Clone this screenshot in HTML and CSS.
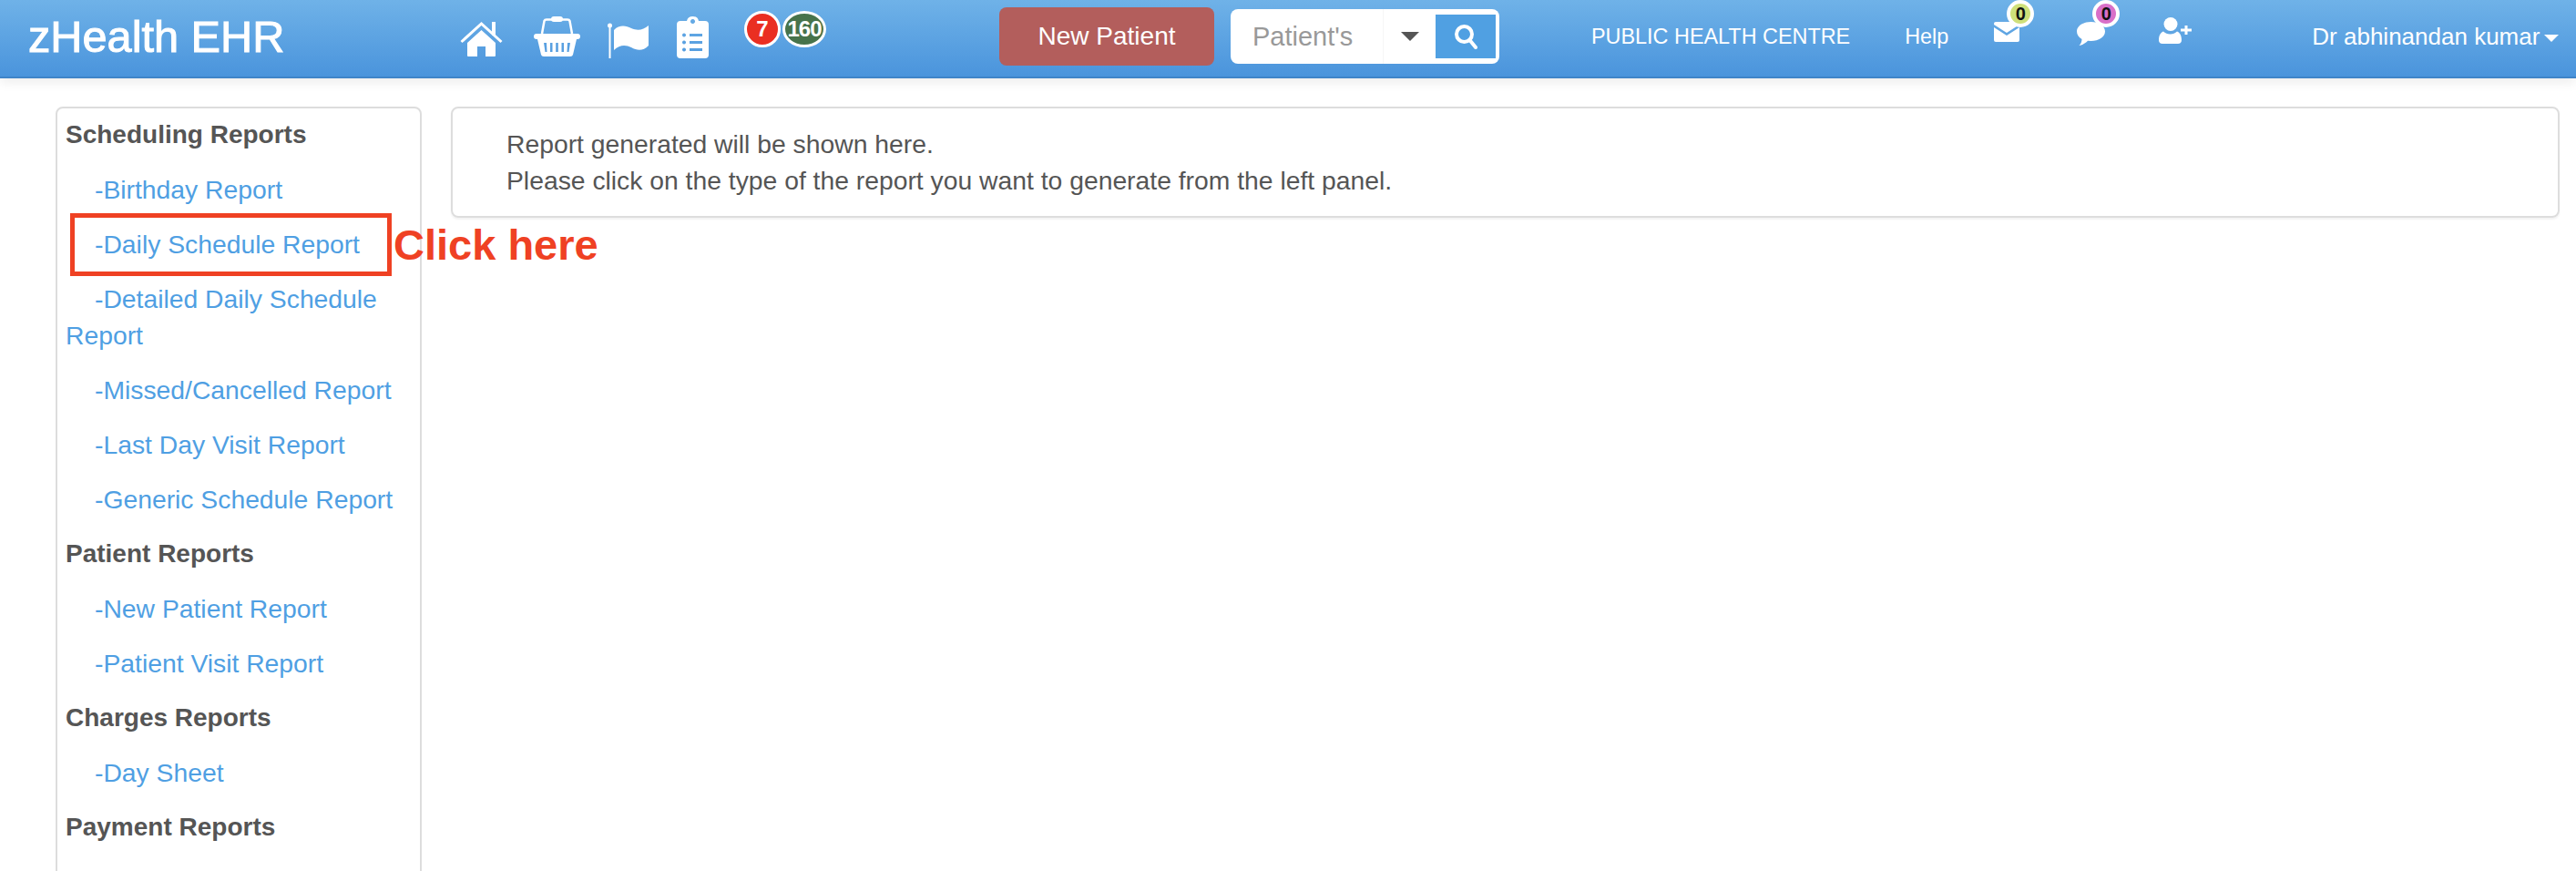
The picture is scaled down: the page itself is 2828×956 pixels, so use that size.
FILE: index.html
```html
<!DOCTYPE html>
<html lang="en">
  <head>
    <meta charset="utf-8" />
    <title>zHealth EHR</title>
    <link rel="stylesheet" href="styles.css">
  </head>
  <body>
    <header class="topbar">
      <a class="brand">zHealth EHR</a>

      <svg class="icon icon-home" viewBox="0 0 47 39">
        <path d="M1.500 23 23.500 3 45.500 23" fill="none" stroke="#fff" stroke-width="3" />
        <rect x="35" y="1" width="4" height="15" fill="#fff" />
        <path d="M8 24 23.500 10 39 24V38a1 1 0 0 1-1 1H28V28H19V39H9a1 1 0 0 1-1-1Z" fill="#fff" />
      </svg>
      <svg class="icon icon-basket" viewBox="0 0 51 44">
        <path d="M9 19 11.500 5Q12 3.500 14 3.500H37Q39 3.500 39.500 5L42 19" fill="none" stroke="#fff" stroke-width="2.500" />
        <rect x="19" y="0" width="13" height="6" rx="3" fill="#fff" />
        <rect x="0" y="19" width="51" height="6" rx="3" fill="#fff" />
        <path fill-rule="evenodd" d="M4 25H47L43 42Q42.500 44 40 44H11Q8.500 44 8 42ZM11 29 12.500 39H14.500L14 29ZM18 29V39H20.500V29ZM24.200 29V39H26.800V29ZM30.500 29V39H33V29ZM37 29 36.500 39H38.500L40 29Z" fill="#fff" />
      </svg>
      <svg class="icon icon-flag" viewBox="0 0 46 39">
        <rect x="1.500" y="3" width="2" height="36" fill="#fff" />
        <circle cx="2.500" cy="3" r="2.500" fill="#fff" />
        <path d="M7 8C13 2 20 3 26 6 33 9 39 8 45 3V25C39 31 33 31 26 27 20 24 13 24 7 30Z" fill="#fff" />
      </svg>
      <svg class="icon icon-clip" viewBox="0 0 35 46">
        <path fill-rule="evenodd" d="M4 5H11Q12 0 17.500 0 23 0 24 5H31Q35 5 35 9V42Q35 46 31 46H4Q0 46 0 42V9Q0 5 4 5ZM17.500 3A2.500 2.500 0 1 0 17.501 3ZM8 18.500A2 2 0 1 0 8.001 18.500ZM14 19V22H28V19ZM8 26.500A2 2 0 1 0 8.001 26.500ZM14 27V30H28V27ZM8 34.500A2 2 0 1 0 8.001 34.500ZM14 35V38H28V35Z" fill="#fff" />
      </svg>

      <span class="count count-red">7</span>
      <span class="count count-green">160</span>

      <button class="btn-new">New Patient</button>

      <div class="search">
        <span class="search-text">Patient's</span>
        <span class="search-drop"><i class="caret caret-dark"></i></span>
        <span class="search-btn">
          <svg viewBox="0 0 26 28" width="26" height="28">
            <circle cx="11.500" cy="11.500" r="8.500" fill="none" stroke="#fff" stroke-width="4" />
            <path d="M17.500 18 24 26" stroke="#fff" stroke-width="4" stroke-linecap="round" />
          </svg>
        </span>
      </div>

      <a class="nav-link nav-org">PUBLIC HEALTH CENTRE</a>
      <a class="nav-link nav-help">Help</a>

      <span class="notify notify-mail">
        <svg class="icon" viewBox="0 0 28 22" width="28" height="22">
          <path d="M0 2Q0 0 2 0H26Q28 0 28 2V3L14 12 0 3Z" fill="#fff" />
          <path d="M0 6 14 15 28 6V20Q28 22 26 22H2Q0 22 0 20Z" fill="#fff" />
        </svg>
        <span class="dot dot-lime">0</span>
      </span>
      <span class="notify notify-chat">
        <svg class="icon" viewBox="0 0 31 26" width="31" height="26">
          <path d="M15.500 0C24 0 31 4.500 31 10.500S24 21 15.500 21L12 20.800C10 23 6.500 25.500 2.500 26 4.500 24 5.500 21.500 5.500 19 2 17 0 14 0 10.500 0 4.500 7 0 15.500 0Z" fill="#fff" />
        </svg>
        <span class="dot dot-pink">0</span>
      </span>
      <svg class="icon icon-user" viewBox="0 0 36 29">
        <ellipse cx="13" cy="7.500" rx="7.500" ry="7.500" fill="#fff" />
        <path d="M0 25C0 20 2 16.500 5 15.500 7 17.500 9.500 18.500 12.500 18.500S18 17.500 20 15.500C23 16.500 25 20 25 25 25 27.500 23.500 29 21 29H4C1.500 29 0 27.500 0 25Z" fill="#fff" />
        <path d="M24 14H36M30 9V19" stroke="#fff" stroke-width="3" />
      </svg>

      <a class="nav-link nav-user">Dr abhinandan kumar<i class="caret caret-white"></i></a>
    </header>

    <main class="page">
      <aside class="sidebar">
        <ul class="report-list">
          <li class="report-head">Scheduling Reports</li>
          <li class="report-item"><a>-Birthday Report</a></li>
          <li class="report-item"><a>-Daily Schedule Report</a></li>
          <li class="report-item"><a>-Detailed Daily Schedule Report</a></li>
          <li class="report-item"><a>-Missed/Cancelled Report</a></li>
          <li class="report-item"><a>-Last Day Visit Report</a></li>
          <li class="report-item"><a>-Generic Schedule Report</a></li>
          <li class="report-head">Patient Reports</li>
          <li class="report-item"><a>-New Patient Report</a></li>
          <li class="report-item"><a>-Patient Visit Report</a></li>
          <li class="report-head">Charges Reports</li>
          <li class="report-item"><a>-Day Sheet</a></li>
          <li class="report-head">Payment Reports</li>
        </ul>
        <div class="callout-box"></div>
        <div class="callout-text">Click here</div>
      </aside>

      <section class="report-panel">
        <p>Report generated will be shown here.</p>
        <p>Please click on the type of the report you want to generate from the left panel.</p>
      </section>
    </main>
  </body>
</html>
```

FILE: styles.css
```css
html, body {
  margin: 0;
  height: 956px;
  overflow: hidden;
  background-color: #fff;
  font-family: "Liberation Sans", Arial, sans-serif;
  color: #555;
}

.topbar {
  display: flex;
  align-items: center;
  height: 80px;
  padding-bottom: 4px;
  background: linear-gradient(to bottom, #6fb2e8, #4a94dc);
  border-bottom: 2px solid #3f84c8;
  box-shadow: 0 4px 12px rgba(0, 0, 0, 0.08);
  color: #fff;
  white-space: nowrap;
}

.brand {
  margin-left: 31px;
  width: 280px;
  font-size: 48.7px;
  -webkit-text-stroke: 1px #fff;
}

.icon {
  display: block;
  flex: none;
}

.icon-home {
  width: 47px;
  height: 39px;
  margin: 5px 0 0 194px;
}

.icon-basket {
  width: 51px;
  height: 44px;
  margin-left: 34px;
}

.icon-flag {
  width: 46px;
  height: 39px;
  margin: 9px 0 0 30px;
}

.icon-clip {
  width: 35px;
  height: 46px;
  margin: 2px 0 0 30px;
}

.count {
  align-self: flex-start;
  margin-top: 12px;
  height: 34px;
  border: 3px solid #fff;
  border-radius: 50%;
  text-align: center;
  font-size: 24px;
  font-weight: bold;
  line-height: 34px;
}

.count-red {
  width: 34px;
  margin-left: 39px;
  background-color: #ea2f22;
}

.count-green {
  width: 42px;
  margin-left: 2px;
  background-color: #47734b;
  letter-spacing: -1px;
}

.btn-new {
  width: 236px;
  height: 64px;
  margin-left: 190px;
  padding: 0;
  border: 0;
  border-radius: 8px;
  background-color: #b35e5c;
  color: #fff;
  font: 28px "Liberation Sans", Arial, sans-serif;
}

.search {
  display: flex;
  align-items: center;
  width: 295px;
  height: 60px;
  margin-left: 18px;
  border-radius: 8px;
  background-color: #fff;
}

.search-text {
  width: 143px;
  padding-left: 24px;
  border-right: 1px solid #f6f6f6;
  height: 60px;
  line-height: 60px;
  font-size: 29px;
  color: #999;
}

.search-drop {
  width: 57px;
  display: flex;
  justify-content: center;
}

.search-btn {
  display: flex;
  align-items: center;
  justify-content: center;
  width: 66px;
  height: 48px;
  background-color: #50a0e2;
}

.caret {
  display: block;
  width: 0;
  height: 0;
  border-style: solid;
  border-color: transparent;
  border-bottom-width: 0;
}

.caret-dark {
  border-width: 10px 10px 0;
  border-top-color: #555;
}

.caret-white {
  display: inline-block;
  margin-left: 5px;
  vertical-align: 3px;
  border-width: 8px 8px 0;
  border-top-color: #fff;
}

.nav-link {
  font-size: 23.4px;
}

.nav-org {
  margin-left: 101px;
}

.nav-help {
  margin-left: 60px;
}

.notify {
  position: relative;
  display: block;
}

.notify-mail {
  margin: -10px 0 0 50px;
}

.notify-chat {
  margin: -6px 0 0 63px;
}

.dot {
  position: absolute;
  width: 22px;
  height: 22px;
  border: 4px solid #fff;
  border-radius: 50%;
  color: #111;
  text-align: center;
  font-size: 20px;
  font-weight: bold;
  line-height: 22px;
}

.notify-mail .dot {
  left: 14px;
  top: -24px;
}

.notify-chat .dot {
  left: 17px;
  top: -24px;
}

.dot-lime {
  background-color: #cfe07a;
}

.dot-pink {
  background-color: #d96fc8;
}

.icon-user {
  width: 36px;
  height: 29px;
  margin: -13px 0 0 59px;
}

.nav-user {
  margin-left: 132px;
  font-size: 26px;
}

.page {
  display: flex;
  gap: 32px;
  padding: 31px 18px 0 61px;
}

.sidebar {
  position: relative;
  flex: none;
  box-sizing: border-box;
  width: 402px;
  height: 900px;
  padding: 0 9px;
  border: 2px solid #ddd;
  border-radius: 8px;
}

.report-list {
  margin: 0;
  padding: 0;
  list-style: none;
  font-size: 28.3px;
  line-height: 40px;
}

.report-head,
.report-item {
  padding: 10px 0;
}

.report-item {
  margin-top: 0;
  text-indent: 32px;
  color: #4f9fe3;
}

.report-head {
  font-weight: bold;
  font-size: 28px;
}

.report-list {
  margin-top: -1px;
}

.callout-box {
  position: absolute;
  left: 14px;
  top: 115px;
  width: 343px;
  height: 59px;
  border: 5px solid #ef4123;
}

.callout-text {
  position: absolute;
  left: 369px;
  top: 123px;
  color: #ef4123;
  font-size: 47px;
  font-weight: bold;
  line-height: 54px;
  white-space: nowrap;
}

.report-panel {
  flex: 1;
  box-sizing: border-box;
  height: 122px;
  padding: 19px 59px;
  border: 2px solid #ddd;
  border-radius: 8px;
  box-shadow: 0 2px 2px rgba(0, 0, 0, 0.05);
  font-size: 28.3px;
  line-height: 40px;
}

.report-panel p {
  margin: 0;
}
```
